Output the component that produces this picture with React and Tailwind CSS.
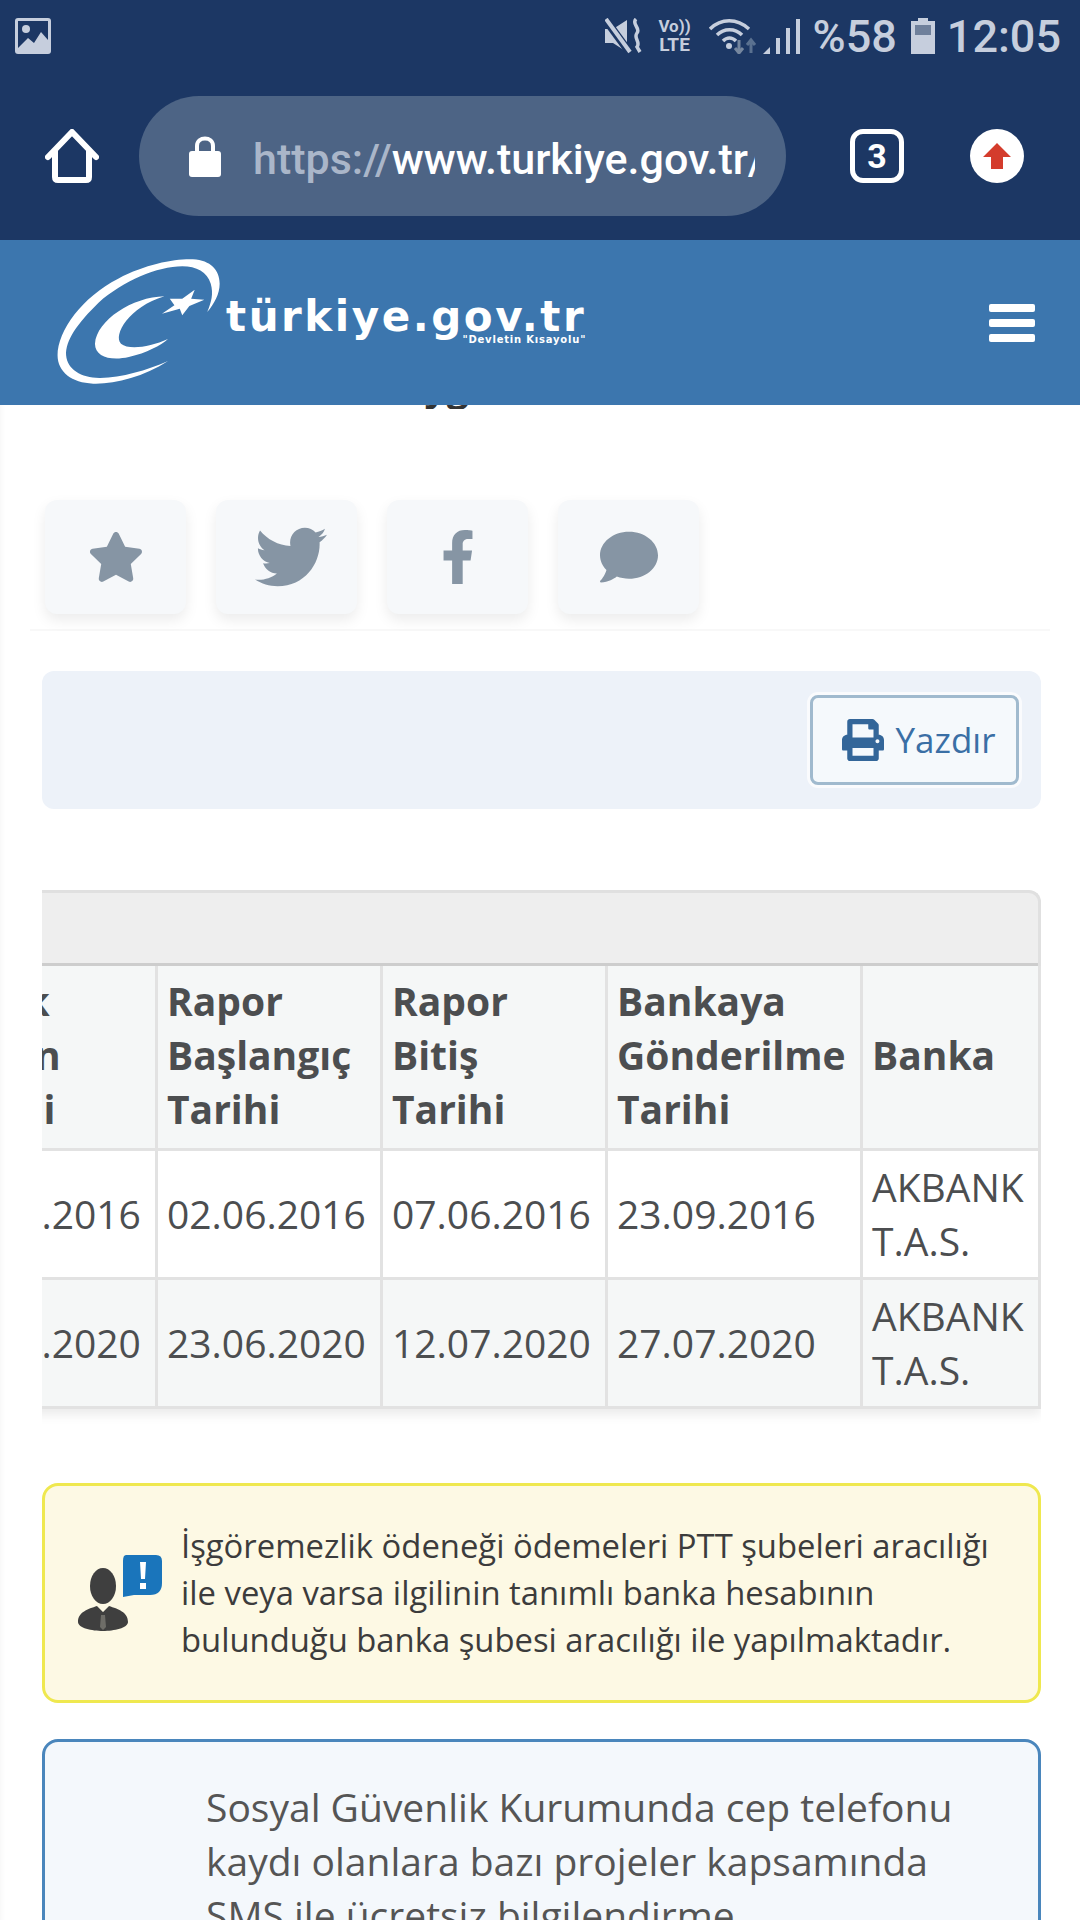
import React from "react";
import { FaStar, FaTwitter, FaFacebookF, FaComment, FaPrint } from "react-icons/fa";

const headers = [
  ["Ödenek", "Alımın", "Tarihi"],
  ["Rapor", "Başlangıç", "Tarihi"],
  ["Rapor", "Bitiş", "Tarihi"],
  ["Bankaya", "Gönderilme", "Tarihi"],
  ["Banka"],
];

const rows = [
  ["07.06.2016", "02.06.2016", "07.06.2016", "23.09.2016"],
  ["15.06.2020", "23.06.2020", "12.07.2020", "27.07.2020"],
];

function StatusBar() {
  return (
    <div className="flex h-[72px] items-center pl-[15px] pr-[19px] text-[#c6cedd] font-['Roboto',sans-serif]">
      <svg width="36" height="36" viewBox="0 0 36 36">
        <rect width="36" height="36" rx="3" fill="#c6cedd" />
        <rect x="3" y="3" width="30" height="30" fill="#1c3764" />
        <circle cx="11" cy="11" r="4" fill="#c6cedd" />
        <path d="M3 30 L13 20 L19 25 L26 14 L33 22 V33 H3 Z" fill="#c6cedd" />
      </svg>
      <div className="ml-auto flex items-center">
        <svg width="38" height="36" viewBox="0 0 38 36" fill="#c6cedd">
          <path d="M0 11 H8 L22 2 V34 L8 25 H0 Z" />
          <path d="M0 1 L25 35" stroke="#1c3764" strokeWidth="8" />
          <path d="M1 1 L25 34" stroke="#c6cedd" strokeWidth="4" />
          <path d="M31 1 C26 6 36 10 32 15 C28 20 36 24 32 29 L35 34" fill="none" stroke="#c6cedd" strokeWidth="3.5" />
        </svg>
        <div className="ml-[14px] flex w-[36px] flex-col items-center font-bold">
          <span className="text-[17px] leading-[17px]">Vo))</span>
          <span className="text-[19px] leading-[19px]">LTE</span>
        </div>
        <svg className="ml-[16px]" width="48" height="36" viewBox="0 0 48 36" fill="none">
          <path d="M1 11 C12 0 28 0 40 11" stroke="#c6cedd" strokeWidth="3.5" />
          <path d="M8 17 C15 10 26 10 33 17" stroke="#c6cedd" strokeWidth="3.5" />
          <path d="M14 23 C18 19 23 19 27 23" stroke="#c6cedd" strokeWidth="3.5" />
          <circle cx="20" cy="28" r="3" fill="#c6cedd" />
          <path d="M30 22 V35 M26 30 L30 35 L34 30" stroke="#76879f" strokeWidth="3" />
          <path d="M42 35 V22 M38 27 L42 22 L46 27" stroke="#5a7190" strokeWidth="3" />
        </svg>
        <svg className="ml-[6px]" width="37" height="36" viewBox="0 0 37 36" fill="#c6cedd">
          <path d="M0 36 L7 29 V36 Z" />
          <rect x="13" y="20" width="4" height="16" />
          <rect x="23" y="10" width="4" height="26" />
          <rect x="33" y="1" width="4" height="35" />
        </svg>
        <span className="ml-[13px] text-[45px] font-medium leading-none">%58</span>
        <svg className="ml-[14px]" width="24" height="36" viewBox="0 0 24 36">
          <path d="M7 0 H17 V3 H24 V36 H0 V3 H7 Z" fill="#c6cedd" />
          <rect x="4" y="7" width="16" height="10" fill="#6f809b" />
        </svg>
        <span className="ml-[12px] text-[45px] font-medium leading-none">12:05</span>
      </div>
    </div>
  );
}

function Toolbar() {
  return (
    <div className="flex h-[168px] items-center pl-[45px] font-['Roboto',sans-serif]">
      <svg width="54" height="54" viewBox="0 0 54 54" fill="none" stroke="#fff" strokeWidth="6" strokeLinecap="round" strokeLinejoin="round">
        <path d="M3 28 L27 3 L51 28" />
        <path d="M10 22 V48 Q10 51 13 51 H41 Q44 51 44 48 V22" />
      </svg>
      <div className="ml-[40px] flex h-[120px] w-[647px] items-center rounded-full bg-[#4d6485] pl-[50px]">
        <svg width="32" height="42" viewBox="0 0 32 42" fill="#fff">
          <path d="M8 18 V11 C8 1 24 1 24 11 V18" fill="none" stroke="#fff" strokeWidth="4" />
          <rect y="16" width="32" height="26" rx="3" />
        </svg>
        <div className="ml-[32px] mt-[6px] w-[502px] overflow-hidden whitespace-nowrap text-[43px] font-medium">
          <span className="text-[#aab6c9]">https://</span>
          <span className="text-white">www.turkiye.gov.tr/</span>
        </div>
      </div>
      <div className="ml-[64px] flex h-[54px] w-[54px] items-center justify-center rounded-[13px] border-[5px] border-white text-[34px] font-bold leading-none text-white">
        3
      </div>
      <div className="ml-[66px] flex h-[54px] w-[54px] items-center justify-center rounded-full bg-white">
        <svg width="28" height="26" viewBox="0 0 28 26" fill="#d43c2c">
          <path d="M14 0 L28 14 H20 V26 H8 V14 H0 Z" />
        </svg>
      </div>
    </div>
  );
}

function SiteHeader() {
  return (
    <header className="flex h-[165px] items-start bg-[#3c76ae] pl-[54px] pr-[45px] pt-[17px]">
      <svg width="171" height="130" viewBox="40 50 480 390" preserveAspectRatio="none" fill="#fff">
        <path d="M360 362 C290 410 210 432 150 430 C90 428 50 395 50 345 C50 270 120 170 220 115 C300 70 380 55 430 57 C480 60 505 90 505 130 C505 160 490 190 470 215 C482 185 488 160 480 130 C470 95 440 78 400 78 C330 78 235 122 165 187 C105 250 72 300 74 345 C77 388 118 414 170 413 C230 412 300 390 360 362 Z" />
        <path d="M350 168 C260 170 160 240 155 310 C155 350 200 362 250 350 C300 338 340 315 360 296 C310 320 250 330 228 310 C205 285 250 200 350 168 Z" />
        <path d="M435 148 L425 175 L462 178 L420 197 L400 225 L393 205 L343 220 L378 195 L365 175 L400 175 Z" />
      </svg>
      <div className="ml-px mt-[41px] flex flex-col items-end text-white font-['DejaVu_Sans',sans-serif] font-bold">
        <span className="text-[42px] leading-[37px] tracking-[2.55px]">türkiye.gov.tr</span>
        <span className="text-[10px] leading-[10px] tracking-[0.8px]">"Devletin Kısayolu"</span>
      </div>
      <div className="ml-auto mt-[47px] flex w-[46px] flex-col gap-[7px]">
        <span className="h-[8px] rounded-[2px] bg-white" />
        <span className="h-[8px] rounded-[2px] bg-white" />
        <span className="h-[8px] rounded-[2px] bg-white" />
      </div>
    </header>
  );
}

function ShareButton({ children }) {
  return (
    <button type="button" className="flex h-[114px] w-[141px] items-center justify-center rounded-[12px] bg-[#f6f8fa] text-[#8695a4] shadow-[0_6px_14px_rgba(0,0,0,0.08)]">
      {children}
    </button>
  );
}

function PersonIcon() {
  return (
    <svg className="shrink-0" width="84" height="76" viewBox="0 0 84 76">
      <path d="M48 0 H78 Q84 0 84 6 V28 Q84 40 72 40 H56 L45 42 V6 Q45 0 48 0 Z" fill="#1a75bb" />
      <path d="M62 7 H68 L67 24 H63 Z M62 28 H68 V34 H62 Z" fill="#fff" />
      <ellipse cx="25" cy="31" rx="13" ry="18" fill="#3f3f3f" />
      <path d="M0 67 C0 57 10 54 19 51 L25 57 L31 51 C40 54 50 57 50 67 C50 73 36 76 25 76 C14 76 0 73 0 67 Z" fill="#3f3f3f" />
      <path d="M19 51 L25 57 L31 51 L29 50 H21 Z M23 60 L22 72 L25 75 L28 72 L27 60 Z" fill="#fdf9e4" fillOpacity="0.25" />
    </svg>
  );
}

function DataTable() {
  return (
    <div className="ml-[42px] mr-[39px] mt-[81px]">
      <div className="h-[76px] rounded-tr-[12px] border-r-[3px] border-t-[3px] border-[#e0e0e0] bg-[#eeeeee] shadow-[inset_0_-3px_0_#cdcdcd]" />
      <div className="flex justify-end overflow-hidden pb-[16px]">
        <table className="w-[1108px] shrink-0 table-fixed border-collapse text-[39px] leading-[54px] text-[#4c4e50] shadow-[0_6px_10px_rgba(0,0,0,0.08)]">
          <colgroup>
            <col className="w-[225px]" />
            <col className="w-[225px]" />
            <col className="w-[225px]" />
            <col className="w-[255px]" />
            <col className="w-[178px]" />
          </colgroup>
          <thead>
            <tr className="h-[183px] bg-[#f5f7f7]">
              {headers.map((lines, i) => (
                <th key={i} className="border-[3px] border-t-0 border-[#e2e2e2] px-[9px] pb-[4px] text-left font-bold">
                  {lines.map((l, j) => (
                    <div key={j} className={i === 0 && j === 0 ? "-ml-[44px]" : i === 0 && j === 1 ? "-ml-[8px]" : ""}>{l}</div>
                  ))}
                </th>
              ))}
            </tr>
          </thead>
          <tbody>
            {rows.map((r, i) => (
              <tr key={i} className={i === 0 ? "h-[129px] bg-white" : "h-[129px] bg-[#f5f7f7]"}>
                {r.map((c, j) => (
                  <td key={j} className="border-[3px] border-[#e2e2e2] px-[9px]">{c}</td>
                ))}
                <td className="border-[3px] border-[#e2e2e2] px-[9px]">AKBANK T.A.S.</td>
              </tr>
            ))}
          </tbody>
        </table>
      </div>
    </div>
  );
}

export default function App() {
  return (
    <div className="h-[1920px] w-[1080px] overflow-hidden bg-white font-['Open_Sans',sans-serif]">
      <div className="bg-[#1c3764]">
        <StatusBar />
        <Toolbar />
      </div>
      <SiteHeader />
      <main className="shadow-[inset_4px_0_4px_-2px_rgba(0,0,0,0.03)]">
        <div className="h-[4px] overflow-hidden pl-[395px]">
          <p className="mt-[-46px] text-[39px] font-bold leading-[54px] text-[#333]">Uygulama</p>
        </div>
        <div className="mt-[91px] flex gap-[30px] pl-[45px]">
          <ShareButton><FaStar size={56} /></ShareButton>
          <ShareButton><FaTwitter size={72} className="ml-[8px]" /></ShareButton>
          <ShareButton><FaFacebookF size={54} /></ShareButton>
          <ShareButton><FaComment size={58} /></ShareButton>
        </div>
        <div className="mx-[30px] mt-[15px] h-[2px] bg-[#f8f8f8] shadow-[0_12px_16px_-4px_rgba(0,0,0,0.09)]" />
        <div className="ml-[42px] mr-[39px] mt-[40px] flex h-[138px] items-center justify-end rounded-[12px] bg-[#edf2f9] pr-[22px]">
          <button type="button" className="flex h-[90px] w-[209px] items-center justify-center gap-[12px] rounded-[8px] border-[3px] border-[#a0bace] bg-[#f5f9fc] pl-[8px] text-[35px] text-[#3a6fa5] shadow-[0_0_0_3px_rgba(255,255,255,0.7)]">
            <FaPrint size={42} className="text-[#336699]" />
            <span>Yazdır</span>
          </button>
        </div>
        <DataTable />
        <div className="ml-[42px] mr-[39px] mt-[58px] flex h-[220px] items-center gap-[19px] rounded-[16px] border-[3px] border-[#efe84f] bg-[#fdf9e4] pl-[33px] pr-[34px] text-[32.8px] leading-[47px] text-[#3c3c3c]">
          <PersonIcon />
          <p>İşgöremezlik ödeneği ödemeleri PTT şubeleri aracılığı ile veya varsa ilgilinin tanımlı banka hesabının bulunduğu banka şubesi aracılığı ile yapılmaktadır.</p>
        </div>
        <div className="ml-[42px] mr-[39px] mt-[36px] h-[400px] rounded-[16px] border-[3px] border-[#4a86bc] bg-[#f4f8fc] pl-[161px] pr-[40px] pt-[38px] text-[39px] leading-[54px] text-[#555]">
          <p>Sosyal Güvenlik Kurumunda cep telefonu kaydı olanlara bazı projeler kapsamında SMS ile ücretsiz bilgilendirme</p>
        </div>
      </main>
    </div>
  );
}
